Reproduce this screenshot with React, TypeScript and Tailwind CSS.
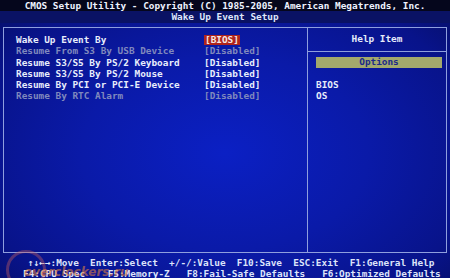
const rows = [
  { label: "Wake Up Event By", value: "[BIOS]", active: true, selected: true },
  { label: "Resume From S3 By USB Device", value: "[Disabled]", active: false },
  { label: "Resume S3/S5 By PS/2 Keyboard", value: "[Disabled]", active: true },
  { label: "Resume S3/S5 By PS/2 Mouse", value: "[Disabled]", active: true },
  { label: "Resume By PCI or PCI-E Device", value: "[Disabled]", active: true },
  { label: "Resume By RTC Alarm", value: "[Disabled]", active: false },
];

export default function App() {
  return (
    <div className="relative h-[278px] w-[450px] overflow-hidden bg-[radial-gradient(ellipse_at_50%_55%,#0b20c4_0%,#0a1aa8_45%,#08138a_80%,#060e66_100%)] font-['DejaVu_Sans_Mono','Liberation_Mono',monospace] text-[9.4px] font-bold text-[#e6ecfa]">
      {/* title bars */}
      <div className="h-[11px] bg-[#05061c] text-center leading-[11px] whitespace-pre text-[#eef2ff]">
        CMOS Setup Utility - Copyright (C) 1985-2005, American Megatrends, Inc.
      </div>
      <div className="h-[12px] bg-[#0a1264] text-center leading-[12px] text-[#dfe6fb]">Wake Up Event Setup</div>

      {/* main frame */}
      <div className="mx-[3px] mt-[4px] flex h-[226px] border border-[#8f9fde]">
        <div className="w-[303px] pl-[12px] pt-[6px]">
          {rows.map((r) => (
            <div key={r.label} className="flex h-[11.3px] items-center leading-[11.3px]">
              <span className={`w-[188px] whitespace-pre ${r.active ? "text-[#e8eefc]" : "text-[#8089bd]"}`}>{r.label}</span>
              {r.selected ? (
                <span className="bg-[#b0241c] px-[1px] leading-[10px] text-[#f4e8e6]">{r.value}</span>
              ) : (
                <span className={r.active ? "text-[#e8eefc]" : "text-[#8089bd]"}>{r.value}</span>
              )}
            </div>
          ))}
        </div>
        <div className="flex flex-1 flex-col border-l border-[#8f9fde]">
          <div className="flex h-[24px] items-center justify-center border-b border-[#8f9fde]">Help Item</div>
          <div className="mt-[5px] ml-[8px] mr-[4px] flex h-[11px] items-center justify-center bg-[#a3a96c] text-[#1a2a8a]">
            Options
          </div>
          <div className="mt-[12px] pl-[8px] leading-[10.5px]">
            <div>BIOS</div>
            <div>OS</div>
          </div>
        </div>
      </div>

      {/* footer */}
      <div className="mt-[4px] leading-[11px] whitespace-pre text-[#dde4fa]">
        <div className="pl-[28px]">↑↓←→:Move  Enter:Select  +/-/:Value  F10:Save  ESC:Exit  F1:General Help</div>
        <div className="pl-[23px]">F4:CPU Spec    F5:Memory-Z   F8:Fail-Safe Defaults   F6:Optimized Defaults</div>
      </div>

      {/* watermark */}
      <div className="pointer-events-none absolute left-[6px] top-[250px] h-[40px] w-[40px] rounded-full border-[3px] border-[#c86060]/40" />
      <div className="pointer-events-none absolute left-[24px] top-[263px] font-['DejaVu_Sans',sans-serif] text-[12px] font-bold italic text-[#e08040]/60">
        overclockers.ru
      </div>
    </div>
  );
}
